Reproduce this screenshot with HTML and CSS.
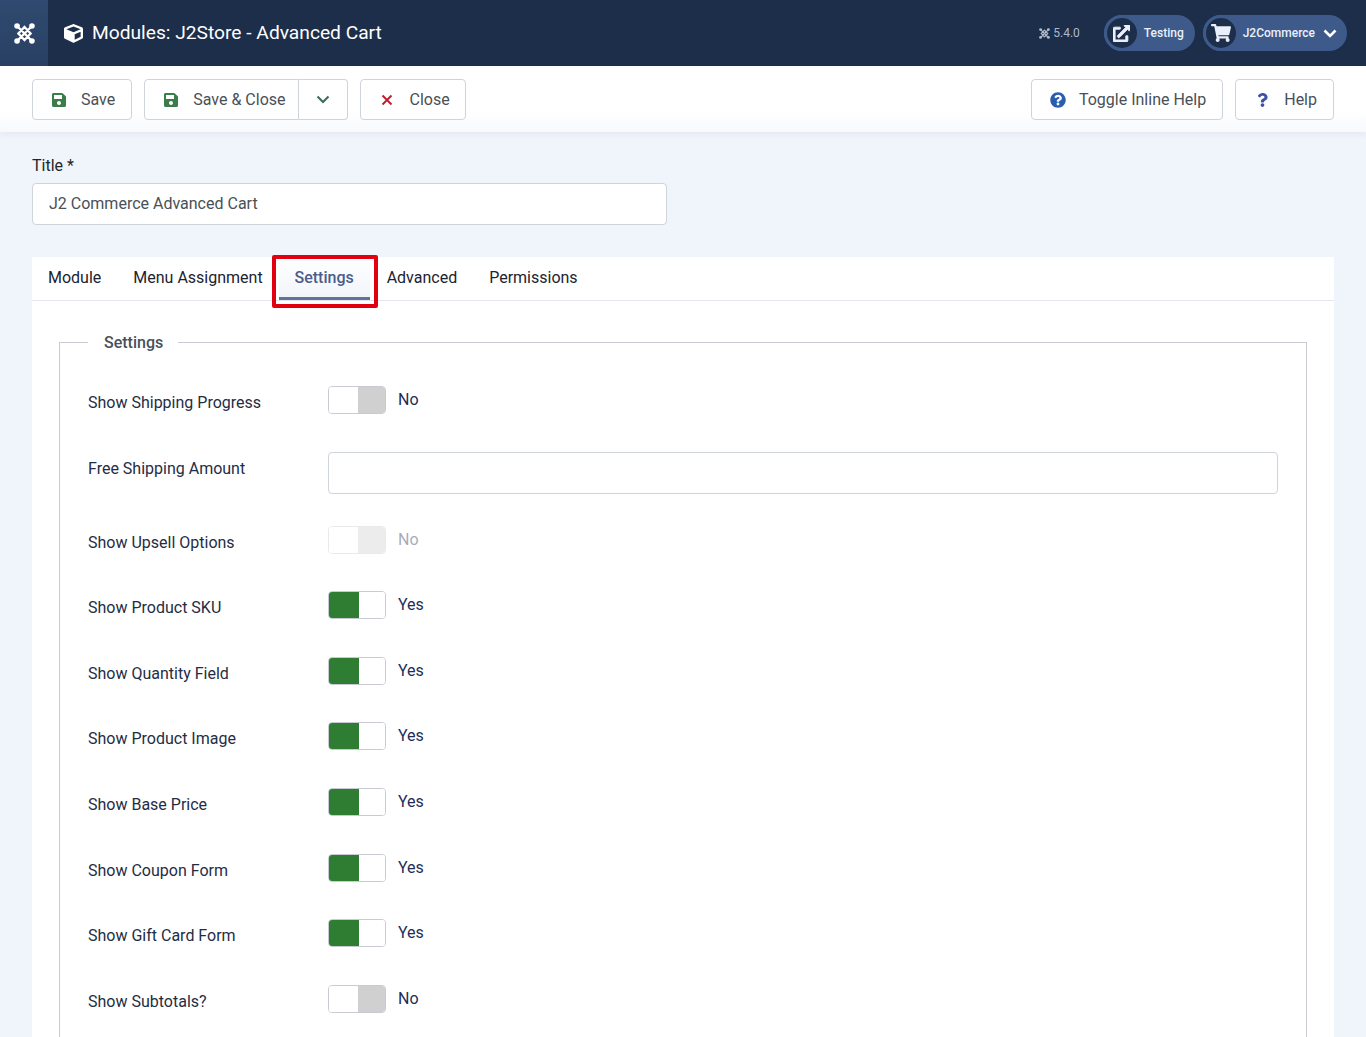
FILE: index.html
```html
<!DOCTYPE html>
<html lang="en">
<head>
<meta charset="utf-8">
<title>Modules: J2Store - Advanced Cart</title>
<link rel="stylesheet" href="styles.css">
</head>
<body>
<svg class="sprite" aria-hidden="true">
  <symbol id="i-joomla" viewBox="0 0 24 24">
    <g class="knot-balls"><circle cx="3.5" cy="3.5" r="3.2"/><circle cx="20.5" cy="3.5" r="3.2"/><circle cx="3.5" cy="20.5" r="3.2"/><circle cx="20.5" cy="20.5" r="3.2"/></g>
    <path class="knot-lines" d="M4 4 17.5 17.5M20 4 6.5 17.5M4 20 9 15M20 20 15 15M12 4.5 19 12 12 19.5 5 12Z"/>
  </symbol>
  <symbol id="i-cube" viewBox="0 0 512 512"><path d="M239.1 6.3l-208 78c-18.7 7-31.1 25-31.1 45v225.1c0 18.2 10.3 34.8 26.5 42.9l208 104c13.5 6.8 29.4 6.8 42.9 0l208-104c16.3-8.1 26.5-24.8 26.5-42.9V129.3c0-20-12.4-37.9-31.1-44.9l-208-78C262 2.2 250 2.2 239.1 6.3zM256 68.4l192 72v1.1l-192 78-192-78v-1.1l192-72zm32 356V275.5l160-65v133.9l-160 80z"/></symbol>
  <symbol id="i-save" viewBox="0 0 448 512"><path d="M433.941 129.941l-83.882-83.882A48 48 0 0 0 316.118 32H48C21.49 32 0 53.49 0 80v352c0 26.51 21.49 48 48 48h352c26.51 0 48-21.49 48-48V163.882a48 48 0 0 0-14.059-33.941zM224 416c-35.346 0-64-28.654-64-64 0-35.346 28.654-64 64-64s64 28.654 64 64c0 35.346-28.654 64-64 64zm96-304.52V212c0 6.627-5.373 12-12 12H76c-6.627 0-12-5.373-12-12V108c0-6.627 5.373-12 12-12h228.52c3.183 0 6.235 1.264 8.485 3.515l3.48 3.48A11.996 11.996 0 0 1 320 111.48z"/></symbol>
  <symbol id="i-link" viewBox="0 0 512 512"><path class="link-path" d="M432,320H400a16,16,0,0,0-16,16V448H64V128H208a16,16,0,0,0,16-16V80a16,16,0,0,0-16-16H48A48,48,0,0,0,0,112V464a48,48,0,0,0,48,48H400a48,48,0,0,0,48-48V336A16,16,0,0,0,432,320ZM488,0h-128c-21.37,0-32.05,25.91-17,41l35.73,35.73L135,320.37a24,24,0,0,0,0,34L157.67,377a24,24,0,0,0,34,0L435.28,133.32,471,169c15,15,41,4.5,41-17V24A24,24,0,0,0,488,0Z"/></symbol>
  <symbol id="i-cart" viewBox="0 0 576 512"><path d="M528.12 301.319l47.273-208C578.806 78.301 567.391 64 551.99 64H159.208l-9.166-44.81C147.758 8.021 137.93 0 126.529 0H24C10.745 0 0 10.745 0 24v16c0 13.255 10.745 24 24 24h69.883l70.248 343.435C147.325 417.1 136 435.222 136 456c0 30.928 25.072 56 56 56s56-25.072 56-56c0-15.674-6.447-29.835-16.824-40h209.647C430.447 426.165 424 440.326 424 456c0 30.928 25.072 56 56 56s56-25.072 56-56c0-22.172-12.888-41.332-31.579-50.405l5.517-24.276c3.413-15.018-8.002-29.319-23.403-29.319H218.117l-6.545-32h293.145c11.206 0 20.92-7.754 23.403-18.681z"/></symbol>
  <symbol id="i-help" viewBox="0 0 512 512"><path d="M504 256c0 136.997-111.043 248-248 248S8 392.997 8 256C8 119.083 119.043 8 256 8s248 111.083 248 248zM262.655 90c-54.497 0-89.255 22.957-116.549 63.758-3.536 5.286-2.353 12.415 2.715 16.258l34.699 26.31c5.205 3.947 12.621 3.008 16.665-2.122 17.864-22.658 30.113-35.797 57.303-35.797 20.429 0 45.698 13.148 45.698 32.958 0 14.976-12.363 22.667-32.534 33.976C247.128 238.528 216 254.941 216 296v4c0 6.627 5.373 12 12 12h56c6.627 0 12-5.373 12-12v-1.333c0-28.462 83.186-29.647 83.186-106.667 0-58.002-60.165-102-116.531-102zM256 338c-25.365 0-46 20.635-46 46 0 25.364 20.635 46 46 46s46-20.636 46-46c0-25.365-20.635-46-46-46z"/></symbol>
  <symbol id="i-question" viewBox="0 0 384 512"><path d="M202.021 0C122.202 0 70.503 32.703 29.914 91.026c-7.363 10.58-5.093 25.086 5.178 32.874l43.138 32.709c10.373 7.865 25.132 6.026 33.253-4.148 25.049-31.381 43.63-49.449 82.757-49.449 30.764 0 68.816 19.799 68.816 49.631 0 22.552-18.617 34.134-48.993 51.164-35.423 19.86-82.299 44.576-82.299 106.405V320c0 13.255 10.745 24 24 24h72.471c13.255 0 24-10.745 24-24v-5.773c0-42.86 125.268-44.645 125.268-160.627C377.504 66.256 286.902 0 202.021 0zM192 373.459c-38.196 0-69.271 31.075-69.271 69.271 0 38.195 31.075 69.27 69.271 69.27s69.271-31.075 69.271-69.271-31.075-69.27-69.271-69.27z"/></symbol>
</svg>

<div class="app">
  <header class="topbar">
    <a class="brand"><svg class="brand-logo"><use href="#i-joomla"/></svg></a>
    <h1 class="page-title"><svg class="title-icon"><use href="#i-cube"/></svg>Modules: J2Store - Advanced Cart</h1>
    <div class="topbar-right">
      <span class="version"><svg class="version-logo"><use href="#i-joomla"/></svg>5.4.0</span>
      <a class="pill"><span class="pill-icon"><svg class="pill-svg"><use href="#i-link"/></svg></span><span class="pill-text">Testing</span></a>
      <a class="pill pill-user"><span class="pill-icon"><svg class="pill-svg pill-svg-cart"><use href="#i-cart"/></svg></span><span class="pill-text">J2Commerce</span>
        <svg class="pill-chevron" viewBox="0 0 14 9"><path d="M1.5 1.5 7 7l5.5-5.5"/></svg></a>
    </div>
  </header>

  <nav class="toolbar">
    <button class="btn"><svg class="btn-icon icon-save"><use href="#i-save"/></svg>Save</button>
    <div class="btn-split">
      <button class="btn btn-main"><svg class="btn-icon icon-save"><use href="#i-save"/></svg>Save &amp; Close</button>
      <button class="btn btn-caret" aria-label="More"><svg class="caret" viewBox="0 0 14 9"><path d="M1.5 1.5 7 7l5.5-5.5"/></svg></button>
    </div>
    <button class="btn btn-close"><svg class="x-icon" viewBox="0 0 12 12"><path d="M1.5 1.5l9 9M10.5 1.5l-9 9"/></svg>Close</button>
    <span class="toolbar-space"></span>
    <button class="btn btn-toggle"><svg class="btn-icon icon-help"><use href="#i-help"/></svg>Toggle Inline Help</button>
    <button class="btn btn-help"><svg class="btn-icon icon-question"><use href="#i-question"/></svg>Help</button>
  </nav>

  <main class="content">
    <label class="title-label" for="title">Title *</label>
    <input class="field title-field" id="title" value="J2 Commerce Advanced Cart">

    <section class="card">
      <div class="tabs">
        <button class="tab">Module</button>
        <button class="tab">Menu Assignment</button>
        <button class="tab tab-active">Settings</button>
        <button class="tab">Advanced</button>
        <button class="tab">Permissions</button>
      </div>
      <fieldset class="settings">
        <legend class="settings-legend">Settings</legend>

        <div class="row"><span class="row-label">Show Shipping Progress</span><div class="switch-wrap"><span class="switch"><i class="knob"></i><i class="off"></i></span><span class="switch-text">No</span></div></div>
        <div class="row"><span class="row-label">Free Shipping Amount</span><input class="field amount-field" aria-label="Free Shipping Amount"></div>
        <div class="row is-disabled"><span class="row-label">Show Upsell Options</span><div class="switch-wrap"><span class="switch"><i class="knob"></i><i class="off"></i></span><span class="switch-text">No</span></div></div>
        <div class="row"><span class="row-label">Show Product SKU</span><div class="switch-wrap"><span class="switch"><i class="on"></i><i class="knob"></i></span><span class="switch-text">Yes</span></div></div>
        <div class="row"><span class="row-label">Show Quantity Field</span><div class="switch-wrap"><span class="switch"><i class="on"></i><i class="knob"></i></span><span class="switch-text">Yes</span></div></div>
        <div class="row"><span class="row-label">Show Product Image</span><div class="switch-wrap"><span class="switch"><i class="on"></i><i class="knob"></i></span><span class="switch-text">Yes</span></div></div>
        <div class="row"><span class="row-label">Show Base Price</span><div class="switch-wrap"><span class="switch"><i class="on"></i><i class="knob"></i></span><span class="switch-text">Yes</span></div></div>
        <div class="row"><span class="row-label">Show Coupon Form</span><div class="switch-wrap"><span class="switch"><i class="on"></i><i class="knob"></i></span><span class="switch-text">Yes</span></div></div>
        <div class="row"><span class="row-label">Show Gift Card Form</span><div class="switch-wrap"><span class="switch"><i class="on"></i><i class="knob"></i></span><span class="switch-text">Yes</span></div></div>
        <div class="row"><span class="row-label">Show Subtotals?</span><div class="switch-wrap"><span class="switch"><i class="knob"></i><i class="off"></i></span><span class="switch-text">No</span></div></div>
      </fieldset>
    </section>
  </main>
</div>
</body>
</html>
```
FILE: styles.css
```css
* { box-sizing: border-box; }
html, body { margin: 0; height: 100%; overflow: hidden; }
body { font-family: Roboto, "Liberation Sans", sans-serif; font-size: 16px; line-height: 24px; color: #22262a; background: #f0f4fb; }
.sprite { display: none; }
svg { fill: currentColor; }
.knot-lines { fill: none; stroke: currentColor; stroke-width: 2.6; }
.link-path { stroke: currentColor; stroke-width: 26; }
.app { height: 100vh; overflow: hidden; display: flex; flex-direction: column; }

.topbar { flex: none; height: 66px; display: flex; align-items: center; background: #1c2e4a; color: #fff; padding-right: 19px; }
.brand { width: 48px; height: 66px; display: flex; align-items: center; justify-content: center; background: linear-gradient(180deg, #2f4a70, #294063); }
.brand-logo { width: 21px; height: 21px; }
.page-title { margin: 0 0 0 16px; display: flex; align-items: center; font-size: 19.2px; font-weight: 400; line-height: 24px; }
.title-icon { width: 19px; height: 19px; margin-right: 9px; }
.topbar-right { margin-left: auto; display: flex; align-items: center; }
.version { display: flex; align-items: center; font-size: 12px; color: #aeb9cb; margin-right: 16px; }
.version-logo { width: 11px; height: 11px; margin-right: 3px; }
.pill { height: 36px; display: flex; align-items: center; border-radius: 18px; background: #3d5a8a; color: #eaf0fb; font-size: 12px; font-weight: 500; padding-right: 11px; margin-left: 8px; }
.pill-icon { width: 36px; height: 36px; border-radius: 50%; background: #1c2e4a; border: 3px solid #3d5a8a; display: flex; align-items: center; justify-content: center; margin-right: 4px; }
.pill-svg { width: 17px; height: 17px; }
.pill-svg-cart { width: 20px; height: 18px; }
.pill-user { padding-right: 10px; }
.pill-chevron { width: 14px; height: 9px; margin-left: 8px; fill: none; stroke: #fff; stroke-width: 2.6; }

.toolbar { flex: none; height: 66px; display: flex; align-items: flex-start; padding: 13px 32px 0; background: linear-gradient(180deg, #fff 0, #fff 70%, #f7f9fc 100%); box-shadow: 0 3px 6px rgba(30, 50, 90, .05); position: relative; }
.btn { height: 41px; display: inline-flex; align-items: center; font: 16px/24px Roboto, "Liberation Sans", sans-serif; color: #495057; background: #fff; border: 1px solid #ced4da; border-radius: 4px; padding: 0 16px 0 19px; margin-right: 12px; }
.btn-icon { width: 14px; height: 16px; margin-right: 15px; }
.icon-save { color: #3a7d4a; }
.icon-help { color: #2a5db0; width: 16px; margin-right: 13px; margin-left: -1px; }
.icon-question { color: #3f51a5; width: 11px; height: 14px; margin-left: 2px; margin-right: 16px; }
.btn-split { display: flex; margin-right: 12px; }
.btn-main { border-radius: 4px 0 0 4px; margin-right: 0; padding-right: 12px; }
.btn-caret { border-radius: 0 4px 4px 0; border-left: 0; margin-right: 0; width: 49px; padding: 0; justify-content: center; box-shadow: none; }
.caret { width: 14px; height: 9px; fill: none; stroke: #3d6b55; stroke-width: 2; }
.x-icon { width: 12px; height: 12px; margin-right: 17px; fill: none; stroke: #c0212f; stroke-width: 2; }
.btn-close { padding-left: 20px; padding-right: 15px; margin-right: 0; }
.toolbar-space { flex: 1; }
.btn-help { margin-right: 0; }

.content { flex: 1; padding: 22px 32px 0; }
.title-label { display: block; margin-bottom: 5px; color: #22262a; }
.field { display: block; height: 42px; border: 1px solid #ced4da; border-radius: 4px; background: #fff; font: 16px/24px Roboto, "Liberation Sans", sans-serif; color: #495057; padding: 0 16px 2px; outline: 0; }
.title-field { width: 635px; margin-bottom: 32px; }

.card { background: #fff; }
.tabs { height: 44px; display: flex; border-bottom: 1px solid #e4e8ee; }
.tab { height: 43px; padding: 0 16px 1px; border: 0; background: transparent; font: 16px/24px Roboto, "Liberation Sans", sans-serif; color: #1c2330; }
.tab-active { position: relative; width: 91px; margin-right: 1px; padding: 2px 0 0; font-weight: 500; color: #4a5d8c; background: linear-gradient(180deg, #fff, #f1f5fb); border-bottom: 3px solid #5f7396; }
.tab-active::after { content: ""; position: absolute; left: -7px; right: -8px; top: -2px; bottom: -11px; border: 4px solid #e0000f; border-radius: 2px; }

.settings { margin: 29px 27px 0; padding: 31px 28px 0; border: 1px solid #c8ccd2; border-bottom: 0; min-width: 0; }
.settings-legend { padding: 1px 15px 0 16px; font-weight: 500; line-height: 24px; color: #495057; }
.row { display: flex; align-items: flex-start; margin-bottom: 32px; }
.row-label { flex: none; width: 240px; padding-top: 5px; color: #1f2d45; }
.amount-field { flex: 1; min-width: 0; }
.switch-wrap { height: 33.6px; display: flex; align-items: flex-start; }
.switch { width: 58px; height: 28px; display: flex; border: 1px solid #c8ccd2; border-radius: 4px; overflow: hidden; background: #fff; }
.switch i { display: block; }
.on { background: #2e7d32; width: 30px; }
.on + .knob { width: 26px; }
.knob { background: #fff; width: 29px; }
.off { background: #d0d0d0; width: 27px; }
.switch-text { margin-left: 12px; line-height: 28px; color: #1f2d58; }
.is-disabled .switch, .is-disabled .switch-text { opacity: .4; }
```
